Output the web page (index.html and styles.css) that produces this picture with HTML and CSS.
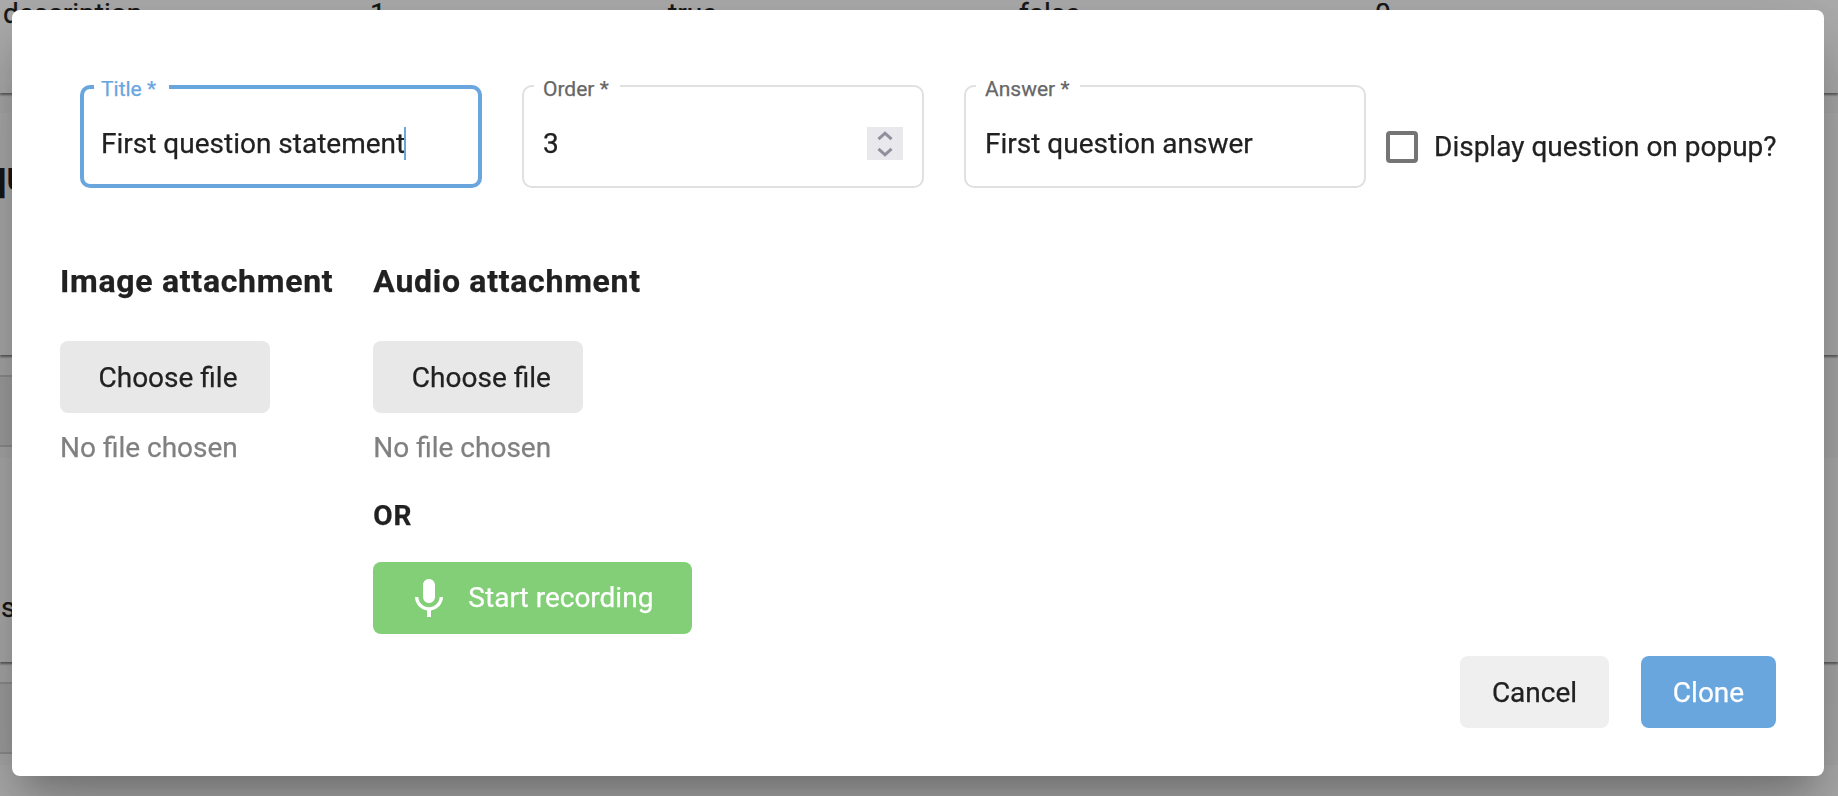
FILE: index.html
```html
<!DOCTYPE html>
<html lang="en">
<head>
<meta charset="utf-8">
<title>Clone question</title>
<link rel="stylesheet" href="styles.css">
</head>
<body>
<main class="page">
  <section class="panel panel-top">
    <div class="table-row"><span>description</span><span>1</span><span>true</span><span>false</span><span>0</span></div>
  </section>
  <div class="gap gap-small"></div>
  <section class="panel panel-heading"><h2 class="page-heading">question</h2></section>
  <div class="gap"><div class="gap-box"></div></div>
  <section class="panel panel-text"><p class="page-text">statement</p></section>
  <div class="gap"><div class="gap-box"></div></div>
  <section class="panel panel-last"></section>
</main>
<div class="backdrop">
  <form class="dialog">
    <div class="fields">
      <div class="field field-focused">
        <label class="field-label">Title *</label>
        <span class="field-value">First question statement</span><span class="caret"></span>
      </div>
      <div class="field">
        <label class="field-label">Order *</label>
        <span class="field-value">3</span>
        <span class="spinner">
          <svg width="36" height="33" viewBox="0 0 36 33"><path d="M11.500 12.200l6.500-6 6.500 6M11.500 21.800l6.500 6 6.500-6"/></svg>
        </span>
      </div>
      <div class="field">
        <label class="field-label">Answer *</label>
        <span class="field-value">First question answer</span>
      </div>
      <label class="check"><span class="check-box"></span><span>Display question on popup?</span></label>
    </div>
    <div class="attachments">
      <section class="attachment">
        <h3 class="attachment-title">Image attachment</h3>
        <button type="button" class="btn btn-file">Choose file</button>
        <p class="file-name">No file chosen</p>
      </section>
      <section class="attachment">
        <h3 class="attachment-title">Audio attachment</h3>
        <button type="button" class="btn btn-file">Choose file</button>
        <p class="file-name">No file chosen</p>
        <p class="or">OR</p>
        <button type="button" class="btn btn-record">
          <svg class="mic" width="48" height="48" viewBox="0 0 24 24"><path d="M12 14c1.660 0 3-1.340 3-3V5c0-1.660-1.340-3-3-3S9 3.340 9 5v6c0 1.660 1.340 3 3 3zm5.300-3c0 3-2.540 5.100-5.300 5.100S6.700 14 6.700 11H5c0 3.410 2.720 6.230 6 6.720V21h2v-3.280c3.280-.48 6-3.300 6-6.720h-1.700z"/></svg>
          <span class="record-text">Start recording</span>
        </button>
      </section>
    </div>
    <div class="actions">
      <button type="button" class="btn btn-cancel">Cancel</button>
      <button type="button" class="btn btn-clone">Clone</button>
    </div>
  </form>
</div>
</body>
</html>
```
FILE: styles.css
```css
* { box-sizing: border-box; }

body {
  margin: 0;
  height: 796px;
  overflow: hidden;
  font-family: Roboto, "Liberation Sans", sans-serif;
  font-size: 28px;
  line-height: 33px;
  color: #212121;
  -webkit-text-stroke: .25px;
}

h2, h3, p { margin: 0; }

/* Page behind the dialog */
.page { height: 796px; overflow: hidden; background: #fafafa; }
.panel { background: #fff; box-shadow: 0 2px 2px rgba(0, 0, 0, .45); }
.panel-top { height: 93px; padding-left: 3px; }
.table-row {
  display: grid;
  grid-template-columns: 367px 298px 351px 356px 1fr;
  line-height: 28px;
}
.gap { height: 103px; padding-top: 20px; }
.gap-small { height: 20px; }
.gap-box {
  width: 900px;
  height: 72px;
  background: #ededed;
  border: solid #d2d2d2;
  border-width: 2px 0;
}
.panel-heading { height: 242px; padding-top: 40px; overflow: hidden; }
.page-heading { margin-left: -16px; font-size: 40px; line-height: 47px; }
.panel-text { height: 204px; padding: 133px 0 0 1px; }
.panel-last { height: 40px; }

/* Dialog */
.backdrop {
  position: fixed;
  inset: 0;
  padding: 10px 14px 20px 12px;
  background: rgba(0, 0, 0, .32);
}
.dialog {
  display: flex;
  flex-direction: column;
  height: 766px;
  padding: 75px 48px 48px;
  background: #fff;
  border-radius: 8px;
  box-shadow: 0 22px 30px -14px rgba(0, 0, 0, .2), 0 48px 76px 6px rgba(0, 0, 0, .14), 0 18px 92px 16px rgba(0, 0, 0, .12);
}
.fields { display: flex; height: 103px; padding-left: 20px; }
.field {
  position: relative;
  display: flex;
  flex-shrink: 0;
  align-items: center;
  width: 402px;
  height: 103px;
  margin-right: 40px;
  padding: 14px 19px 0 19px;
  border: 2px solid #e0e0e0;
  border-radius: 10px;
}
.field:nth-child(3) { margin-right: 20px; }
.field-focused { padding: 14px 17px 0 17px; border: 4px solid #69a6de; }
.field-label {
  position: absolute;
  top: -10px;
  left: 10px;
  padding: 0 11px 0 9px;
  font-size: 21px;
  line-height: 24px;
  color: #666;
  background: #fff;
}
.field-focused .field-label { top: -12px; padding: 0 13px 0 7px; color: #69a6de; }
.field-focused .field-value { margin-right: -1px; }
.caret { width: 2px; height: 33px; background: #69a6de; }
.spinner { height: 33px; margin-left: auto; background: #e9e8ed; }
.spinner svg { display: block; fill: none; stroke: #8f8f9d; stroke-width: 3; }
.check {
  display: flex;
  flex-shrink: 0;
  align-items: center;
  align-self: center;
  gap: 16px;
  height: 123px;
  padding-top: 20px;
  white-space: nowrap;
}
.check-box { width: 32px; height: 32px; border: 4px solid #757575; border-radius: 4px; }

.attachments { display: flex; gap: 40px; margin-top: 73px; }
.attachment { display: flex; flex-direction: column; align-items: flex-start; min-width: 273px; }
.attachment-title {
  margin-bottom: 40px;
  font-size: 32px;
  line-height: 40px;
  font-weight: 700;
  letter-spacing: .71px;
}

.btn {
  display: flex;
  align-items: center;
  justify-content: center;
  height: 72px;
  padding: 0 32px;
  border: 0;
  border-radius: 8px;
  font: inherit;
  line-height: 33px;
  color: #212121;
}
.btn-file { width: 210px; padding-left: 38px; background: #e8e8e8; }
.file-name { margin-top: 18px; color: #808080; }
.or { margin-top: 35px; font-weight: 700; letter-spacing: .8px; }
.btn-record {
  justify-content: flex-start;
  width: 319px;
  margin-top: 30px;
  gap: 15px;
  background: #82cf77;
  color: #fff;
}
.mic { margin-top: 1px; fill: #fff; }
.record-text { margin-bottom: 2px; }

.actions { display: flex; justify-content: flex-end; gap: 32px; margin-top: auto; }
.btn-cancel { width: 149px; background: #efefef; }
.btn-clone { width: 135px; background: #69a6de; color: #fff; }
```
